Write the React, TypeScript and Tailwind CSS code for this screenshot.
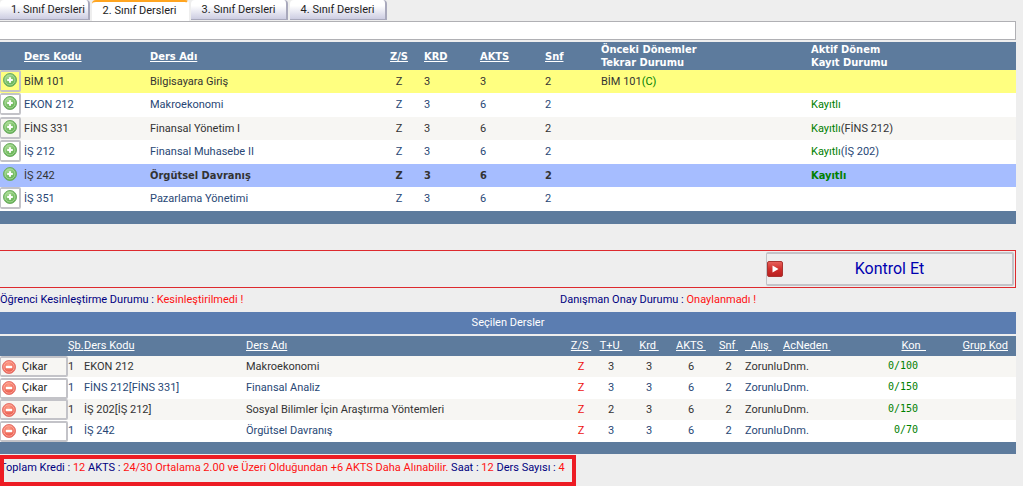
import clsx from 'clsx';

const tabs = ['1. Sınıf Dersleri', '2. Sınıf Dersleri', '3. Sınıf Dersleri', '4. Sınıf Dersleri'];

const boldFont = "font-['DejaVu_Sans_Condensed','DejaVu_Sans',sans-serif]";

const courses = [
  { code: 'BİM 101', name: 'Bilgisayara Giriş', krd: 3, akts: 3, snf: 2, repeat: 'BİM 101', grade: '(C)', status: '', replaced: '', row: 'bg-[#ffff80] text-[#333333]' },
  { code: 'EKON 212', name: 'Makroekonomi', krd: 3, akts: 6, snf: 2, repeat: '', grade: '', status: 'Kayıtlı', replaced: '', row: 'bg-white text-[#284775]' },
  { code: 'FİNS 331', name: 'Finansal Yönetim I', krd: 3, akts: 6, snf: 2, repeat: '', grade: '', status: 'Kayıtlı', replaced: '(FİNS 212)', row: 'bg-[#f7f6f3] text-[#333333]' },
  { code: 'İŞ 212', name: 'Finansal Muhasebe II', krd: 3, akts: 6, snf: 2, repeat: '', grade: '', status: 'Kayıtlı', replaced: '(İŞ 202)', row: 'bg-white text-[#284775]' },
  { code: 'İŞ 242', name: 'Örgütsel Davranış', krd: 3, akts: 6, snf: 2, repeat: '', grade: '', status: 'Kayıtlı', replaced: '', row: 'bg-[#a6bdff] text-[#333333]', selected: true },
  { code: 'İŞ 351', name: 'Pazarlama Yönetimi', krd: 3, akts: 6, snf: 2, repeat: '', grade: '', status: '', replaced: '', row: 'bg-white text-[#284775]' },
];

const selectedCourses = [
  { code: 'EKON 212', name: 'Makroekonomi', tu: 3, krd: 3, akts: 6, snf: 2, kon: '0/100' },
  { code: 'FİNS 212[FİNS 331]', name: 'Finansal Analiz', tu: 3, krd: 3, akts: 6, snf: 2, kon: '0/150' },
  { code: 'İŞ 202[İŞ 212]', name: 'Sosyal Bilimler İçin Araştırma Yöntemleri', tu: 2, krd: 3, akts: 6, snf: 2, kon: '0/150' },
  { code: 'İŞ 242', name: 'Örgütsel Davranış', tu: 3, krd: 3, akts: 6, snf: 2, kon: '0/70' },
];

function AddIcon() {
  return (
    <svg width="14" height="14" viewBox="0 0 14 14" aria-hidden="true">
      <defs>
        <radialGradient id="addFill" cx="40%" cy="30%" r="75%">
          <stop offset="0" stopColor="#a9dc92" />
          <stop offset="1" stopColor="#4fa541" />
        </radialGradient>
      </defs>
      <circle cx="7" cy="7" r="6.5" fill="url(#addFill)" stroke="#6fae64" />
      <circle cx="7" cy="7" r="5" fill="none" stroke="#b9e3a9" strokeWidth="0.8" />
      <path d="M7 4.2v5.6M4.2 7h5.6" stroke="#fff" strokeWidth="2" />
    </svg>
  );
}

function RemoveIcon() {
  return (
    <svg width="14" height="14" viewBox="0 0 14 14" aria-hidden="true">
      <defs>
        <radialGradient id="removeFill" cx="45%" cy="30%" r="75%">
          <stop offset="0" stopColor="#ff9c86" />
          <stop offset="1" stopColor="#e34a3e" />
        </radialGradient>
      </defs>
      <circle cx="7" cy="7" r="6.5" fill="url(#removeFill)" stroke="#e57670" />
      <circle cx="7" cy="7" r="5.2" fill="none" stroke="#ffb3a4" strokeWidth="0.8" />
      <path d="M3.8 7h6.4" stroke="#fff" strokeWidth="2.4" />
    </svg>
  );
}

function PlayIcon() {
  return (
    <svg width="16" height="16" viewBox="0 0 16 16" aria-hidden="true">
      <defs>
        <linearGradient id="playFill" x1="0" y1="0" x2="0" y2="1">
          <stop offset="0" stopColor="#e8625c" />
          <stop offset="0.5" stopColor="#d02f2c" />
          <stop offset="1" stopColor="#b81f1f" />
        </linearGradient>
      </defs>
      <rect x="0.5" y="0.5" width="15" height="15" rx="1.5" fill="url(#playFill)" stroke="#a93431" />
      <path d="M5.5 4.5v7l6-3.5z" fill="#fff" />
    </svg>
  );
}

function SortLink({ children }: { children: string }) {
  return (
    <a href="#" className="whitespace-pre underline">
      {children}
    </a>
  );
}

function CourseTable() {
  return (
    <table className="w-full table-fixed border-collapse text-left">
      <colgroup>
        <col className="w-[24px]" />
        <col className="w-[126px]" />
        <col className="w-[236px]" />
        <col className="w-[26px]" />
        <col className="w-[68px]" />
        <col className="w-[65px]" />
        <col className="w-[56px]" />
        <col className="w-[210px]" />
        <col />
      </colgroup>
      <thead>
        <tr className={clsx('h-[28px] bg-[#5d7b9d] leading-[13px] text-white', boldFont)}>
          <th />
          <th><SortLink>Ders Kodu</SortLink></th>
          <th><SortLink>Ders Adı</SortLink></th>
          <th className="text-center"><SortLink>Z/S</SortLink></th>
          <th className="pl-3"><SortLink>KRD</SortLink></th>
          <th><SortLink>AKTS</SortLink></th>
          <th><SortLink>Snf</SortLink></th>
          <th>Önceki Dönemler<br />Tekrar Durumu</th>
          <th>Aktif Dönem<br />Kayıt Durumu</th>
        </tr>
      </thead>
      <tbody>
        {courses.map((course) => {
          const bold = course.selected && `font-bold ${boldFont}`;
          return (
            <tr key={course.code} className={clsx('h-[23px] even:h-[24px]', course.row)}>
              <td className="align-top">
                <button
                  type="button"
                  aria-label={`${course.code} ekle`}
                  className={clsx(
                    'flex h-[22px] w-[21px] justify-center rounded-xs border-2 border-l-1 pt-px pr-px',
                    course.selected ? 'border-transparent' : 'border-[#c3c3c8]',
                  )}
                >
                  <AddIcon />
                </button>
              </td>
              <td>{course.code}</td>
              <td className={clsx(bold)}>{course.name}</td>
              <td className={clsx('text-center', bold)}>Z</td>
              <td className={clsx('pl-3', bold)}>{course.krd}</td>
              <td className={clsx(bold)}>{course.akts}</td>
              <td className={clsx(bold)}>{course.snf}</td>
              <td>
                {course.repeat}
                <span className="text-[#008000]">{course.grade}</span>
              </td>
              <td className={clsx(bold)}>
                <span className="text-[#008000]">{course.status}</span>
                {course.replaced}
              </td>
            </tr>
          );
        })}
      </tbody>
      <tfoot>
        <tr className="h-[13px] bg-[#5d7b9d]">
          <td colSpan={9} />
        </tr>
      </tfoot>
    </table>
  );
}

function SelectedTable() {
  return (
    <table className="w-full table-fixed border-collapse text-left">
      <caption className="h-[24px] border-b-2 border-[#eeeeee] bg-[#5b7db1] text-center leading-[22px] text-white">
        Seçilen Dersler
      </caption>
      <colgroup>
        <col className="w-[68px]" />
        <col className="w-[16px]" />
        <col className="w-[162px]" />
        <col className="w-[320px]" />
        <col className="w-[30px]" />
        <col className="w-[30px]" />
        <col className="w-[46px]" />
        <col className="w-[36px]" />
        <col className="w-[37px]" />
        <col className="w-[38px]" />
        <col className="w-[63px]" />
        <col className="w-[80px]" />
        <col />
      </colgroup>
      <thead>
        <tr className="h-[20px] whitespace-nowrap bg-[#5d7b9d] text-white [&>th]:font-normal">
          <th />
          <th><SortLink>Şb.</SortLink></th>
          <th><SortLink>Ders Kodu</SortLink></th>
          <th><SortLink>Ders Adı</SortLink></th>
          <th className="text-center"><SortLink>{'Z/S\u00a0'}</SortLink></th>
          <th className="text-center"><SortLink>{'T+U\u00a0'}</SortLink></th>
          <th className="text-center"><SortLink>{'Krd\u00a0'}</SortLink></th>
          <th className="pl-1"><SortLink>{'AKTS\u00a0'}</SortLink></th>
          <th className="pl-1 text-center"><SortLink>{'Snf\u00a0'}</SortLink></th>
          <th><SortLink>{'\u00a0\u00a0Alış\u00a0'}</SortLink></th>
          <th><SortLink>{'AcNeden\u00a0'}</SortLink></th>
          <th className="text-right"><SortLink>{'Kon\u00a0\u00a0'}</SortLink></th>
          <th className="pr-2 text-right"><SortLink>Grup Kod</SortLink></th>
        </tr>
      </thead>
      <tbody>
        {selectedCourses.map((course) => (
          <tr
            key={course.code}
            className="h-[21px] bg-[#f7f6f3] text-[#333333] even:h-[22px] even:bg-white even:text-[#284775]"
          >
            <td>
              <button
                type="button"
                className="flex h-[21px] w-full items-center gap-1.5 rounded-xs border-2 border-l-1 border-[#c3c3c8] pl-px text-[#222222]"
              >
                <RemoveIcon />
                Çıkar
              </button>
            </td>
            <td>1</td>
            <td>{course.code}</td>
            <td>{course.name}</td>
            <td className="text-center text-[#ee1111]">Z</td>
            <td className="text-center">{course.tu}</td>
            <td className="text-center">{course.krd}</td>
            <td className="pl-4">{course.akts}</td>
            <td className="pl-1 text-center">{course.snf}</td>
            <td>Zorunlu</td>
            <td>Dnm.</td>
            <td className="pr-2 pb-0.5 text-right font-[DejaVu_Sans_Mono,monospace] text-[10px] text-[#008000]">{course.kon}</td>
            <td />
          </tr>
        ))}
      </tbody>
      <tfoot>
        <tr className="h-[12px] bg-[#5d7b9d]">
          <td colSpan={13} />
        </tr>
      </tfoot>
    </table>
  );
}

export default function App() {
  return (
    <div className="min-h-screen overflow-hidden bg-[#eeeeee] pr-[7px] font-['Roboto',sans-serif] text-[11px] leading-[14px] text-[#000080]">
      <nav role="tablist" className="flex h-[21px] gap-0.5">
        {tabs.map((tab, index) => (
          <button
            key={tab}
            type="button"
            role="tab"
            aria-selected={index === 1}
            className={clsx(
              'w-[97px] rounded-t-sm border-r-2 text-[#222222] first:w-[90px] first:pl-2',
              index === 1
                ? 'h-[21px] border-t-2 border-r-white border-t-[#ffa520] bg-white pb-0.5'
                : 'h-[20px] border-b border-r-[#a9a9bc] border-b-[#a9a9bc] bg-linear-to-b from-white from-30% to-[#cdcde2]',
            )}
          >
            {tab}
          </button>
        ))}
      </nav>
      <div className="h-[19px] border border-l-0 border-[#b0b0b4] bg-white" />

      <main className="pt-0.5">
        <CourseTable />

        <div className="mt-[26px] flex justify-end border border-l-0 border-[#dd2a2e] p-px">
          <button
            type="button"
            className="flex h-[34px] w-[248px] items-center rounded-xs border-2 border-l-1 border-[#c3c3c8] text-base text-[#0000b0]"
          >
            <PlayIcon />
            <span className="flex-1 pr-4">Kontrol Et</span>
          </button>
        </div>

        <div className="flex h-[24px] items-center">
          <p className="w-[560px]">
            Öğrenci Kesinleştirme Durumu : <span className="text-[#ff1111]">Kesinleştirilmedi !</span>
          </p>
          <p>
            Danışman Onay Durumu : <span className="text-[#ff1111]">Onaylanmadı !</span>
          </p>
        </div>

        <SelectedTable />

        <div className="relative mt-px h-[31px] w-[576px] pt-1.5">
          <p className="whitespace-nowrap">
            Toplam Kredi : <span className="text-[#ff1111]">12</span> AKTS :{' '}
            <span className="text-[#ff1111]">24/30 Ortalama 2.00 ve Üzeri Olduğundan +6 AKTS Daha Alınabilir.</span> Saat :{' '}
            <span className="text-[#ff1111]">12</span> Ders Sayısı : <span className="text-[#ff1111]">4</span>
          </p>
          <div className="absolute inset-0 border-4 border-[#ed1c24]" />
        </div>
      </main>
    </div>
  );
}
